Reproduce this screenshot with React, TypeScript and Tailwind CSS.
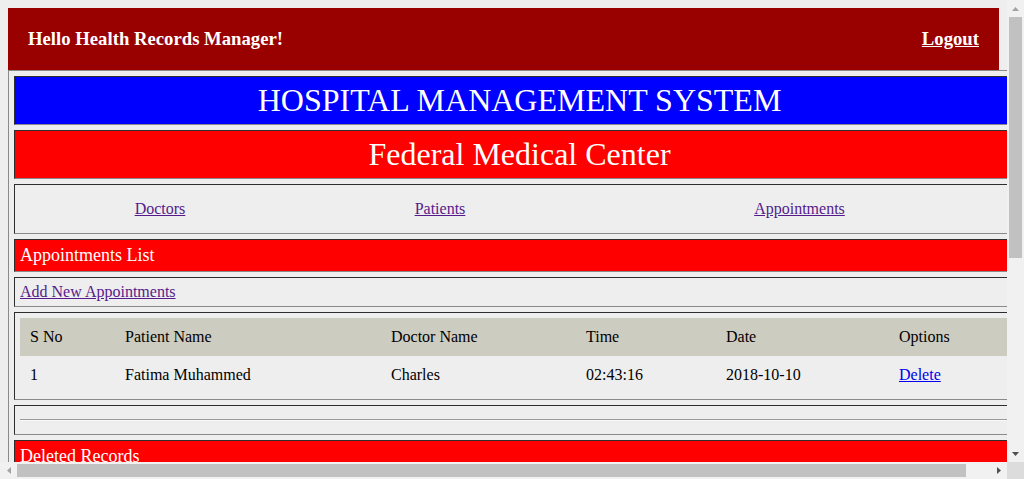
import React from 'react';

interface IAppointment {
  id: number;
  patient: string;
  doctor: string;
  time: string;
  date: string;
}

const appointments: IAppointment[] = [
  { id: 1, patient: 'Fatima Muhammed', doctor: 'Charles', time: '02:43:16', date: '2018-10-10' },
];

const deleted: IAppointment[] = [
  { id: 1, patient: 'Ibrahim Musa', doctor: 'Charles', time: '11:20:05', date: '2018-10-08' },
  { id: 2, patient: 'Aisha Bello', doctor: 'Adamu', time: '09:15:40', date: '2018-10-09' },
  { id: 3, patient: 'John Okafor', doctor: 'Charles', time: '14:02:11', date: '2018-10-09' },
  { id: 4, patient: 'Grace Eze', doctor: 'Adamu', time: '16:30:00', date: '2018-10-10' },
];

/* inset cell border, like a table with border="1" */
const cell = 'border border-t-[#2e2e2e] border-l-[#2e2e2e] border-b-[#8a8a8a] border-r-[#8a8a8a] p-[5px]';

const cols = ['w-[95px]', 'w-[266px]', 'w-[195px]', 'w-[140px]', 'w-[173px]', ''];

const RecordTable: React.FC<{ rows: IAppointment[]; action: string }> = ({ rows, action }) => (
  <div className={cell}>
    <table className="w-full table-fixed border-collapse text-left">
      <thead className="bg-[#cdccc0]">
        <tr>
          {['S No', 'Patient Name', 'Doctor Name', 'Time', 'Date', 'Options'].map((h, i) => (
            <th key={h} className={`${cols[i]} px-[10px] py-[10px] font-normal leading-[18px]`}>
              {h}
            </th>
          ))}
        </tr>
      </thead>
      <tbody>
        {rows.map((r) => (
          <tr key={r.id}>
            <td className="px-[10px] py-[10px] leading-[18px]">{r.id}</td>
            <td className="px-[10px] py-[10px] leading-[18px]">{r.patient}</td>
            <td className="px-[10px] py-[10px] leading-[18px]">{r.doctor}</td>
            <td className="px-[10px] py-[10px] leading-[18px]">{r.time}</td>
            <td className="px-[10px] py-[10px] leading-[18px]">{r.date}</td>
            <td className="px-[10px] py-[10px] leading-[18px]">
              <a href="#" className="text-[#0000ee] underline">
                {action}
              </a>
            </td>
          </tr>
        ))}
      </tbody>
    </table>
  </div>
);

const Rule: React.FC = () => (
  <div className={cell}>
    <div className="my-2 h-[2px] border-t border-t-[#9a9a9a] border-b border-b-[#f8f8f8]" />
  </div>
);

/* ---------------- Scrollbar chrome ---------------- */
const ArrowUp = () => (
  <svg width="7" height="4" viewBox="0 0 7 4">
    <path d="M0 4 L3.5 0 L7 4 Z" fill="#a3a3a3" />
  </svg>
);
const ArrowDown = () => (
  <svg width="7" height="4" viewBox="0 0 7 4">
    <path d="M0 0 L7 0 L3.5 4 Z" fill="#505050" />
  </svg>
);
const ArrowLeft = () => (
  <svg width="4" height="7" viewBox="0 0 4 7">
    <path d="M4 0 L4 7 L0 3.5 Z" fill="#a3a3a3" />
  </svg>
);
const ArrowRight = () => (
  <svg width="4" height="7" viewBox="0 0 4 7">
    <path d="M0 0 L4 3.5 L0 7 Z" fill="#505050" />
  </svg>
);

const App: React.FC = () => {
  return (
    <div className="flex h-[479px] w-[1024px] flex-col overflow-hidden bg-[#f1f1f1] font-['Liberation_Serif','Times_New_Roman',serif] text-base text-black">
      <div className="flex min-h-0 flex-1">
        {/* Page viewport */}
        <div className="min-w-0 flex-1 overflow-hidden bg-[#eeeeee] p-2">
          {/* Header */}
          <div className="flex h-[62px] items-center justify-between bg-[#990000] px-5 text-[18.72px] font-bold text-white">
            <span>Hello Health Records Manager!</span>
            <a href="#" className="underline">
              Logout
            </a>
          </div>

          {/* Main frame */}
          <div className="flex w-[1023px] flex-col gap-[5px] border border-t-[#8a8a8a] border-l-[#8a8a8a] border-b-[#3a3a3a] border-r-[#3a3a3a] p-[5px]">
            <div className={`${cell} bg-[#0000ff] text-center text-[32px] leading-[37px] text-white`}>
              HOSPITAL MANAGEMENT SYSTEM
            </div>

            <div className={`${cell} bg-[#ff0000] text-center text-[32px] leading-[37px] text-white`}>
              Federal Medical Center
            </div>

            {/* Nav */}
            <div className={`${cell} flex h-[50px] items-center`}>
              <div className="w-[280px] text-center">
                <a href="#" className="text-[#551a8b] underline">
                  Doctors
                </a>
              </div>
              <div className="w-[280px] text-center">
                <a href="#" className="text-[#551a8b] underline">
                  Patients
                </a>
              </div>
              <div className="flex-1 text-center">
                <a href="#" className="text-[#551a8b] underline">
                  Appointments
                </a>
              </div>
            </div>

            <div className={`${cell} bg-[#ff0000] text-[18px] leading-[21px] text-white`}>Appointments List</div>

            <div className={`${cell} leading-[18px]`}>
              <a href="#" className="text-[#551a8b] underline">
                Add New Appointments
              </a>
            </div>

            <RecordTable rows={appointments} action="Delete" />

            <Rule />

            <div className={`${cell} bg-[#ff0000] text-[18px] leading-[21px] text-white`}>Deleted Records</div>

            <RecordTable rows={deleted} action="Restore" />

            <Rule />
          </div>
        </div>

        {/* Vertical scrollbar */}
        <div className="flex w-[17px] shrink-0 flex-col bg-[#f1f1f1]">
          <div className="flex h-[17px] items-center justify-center">
            <ArrowUp />
          </div>
          <div className="flex min-h-0 flex-1 flex-col px-[2px]">
            <div className="h-[241px] bg-[#c1c1c1]" />
          </div>
          <div className="flex h-[17px] items-center justify-center">
            <ArrowDown />
          </div>
        </div>
      </div>

      {/* Horizontal scrollbar */}
      <div className="flex h-[17px] shrink-0">
        <div className="flex flex-1 bg-[#f1f1f1]">
          <div className="flex w-[17px] items-center justify-center">
            <ArrowLeft />
          </div>
          <div className="flex flex-1 items-center">
            <div className="h-[13px] w-[949px] bg-[#c1c1c1]" />
          </div>
          <div className="flex w-[17px] items-center justify-center">
            <ArrowRight />
          </div>
        </div>
        <div className="w-[17px] bg-[#dcdcdc]" />
      </div>
    </div>
  );
};

export default App;
